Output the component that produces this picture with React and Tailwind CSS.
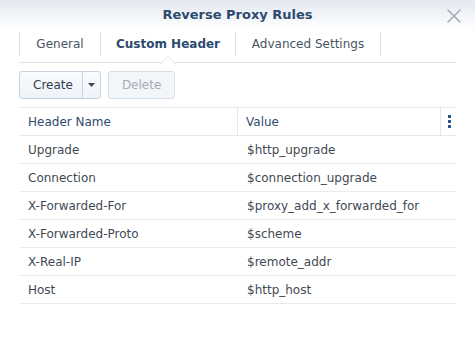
import { X } from "lucide-react";

const rows = [
  ["Upgrade", "$http_upgrade"],
  ["Connection", "$connection_upgrade"],
  ["X-Forwarded-For", "$proxy_add_x_forwarded_for"],
  ["X-Forwarded-Proto", "$scheme"],
  ["X-Real-IP", "$remote_addr"],
  ["Host", "$http_host"],
];

const App = () => {
  return (
    <div className="w-[475px] h-[340px] bg-white overflow-hidden font-['DejaVu_Sans',sans-serif] text-[12px] text-[#3f4954]">
      {/* TITLE BAR */}
      <div className="relative h-[30px] bg-gradient-to-b from-[#e3e9f0] to-white flex items-center justify-center">
        <span className="text-[13px] font-bold text-[#2c4a6e]">Reverse Proxy Rules</span>
        <X className="absolute right-[9px] top-[4px] text-[#a6abb2]" size={24} strokeWidth={1.5} />
      </div>

      {/* TABS */}
      <div className="mx-[19px] relative border-b border-[#dfe3e8]">
        <div className="flex pt-[2px] h-[32px]">
          <div className="flex items-center justify-center w-[81px] h-[24px] border-l border-[#dbe1e8] text-[#475562]">General</div>
          <div className="relative flex items-center justify-center w-[135px] h-[24px] border-l border-[#dbe1e8] font-bold text-[#2c4a6e]">
            Custom Header
            <svg className="absolute left-1/2 -translate-x-1/2 top-[24px]" width="16" height="9" viewBox="0 0 16 9">
              <path d="M0 8.5 L8 0.5 L16 8.5" fill="white" stroke="#dfe3e8" />
            </svg>
          </div>
          <div className="flex items-center justify-center w-[146px] h-[24px] border-l border-r border-[#dbe1e8] text-[#475562]">Advanced Settings</div>
        </div>
      </div>

      {/* TOOLBAR */}
      <div className="flex gap-[7px] mx-[19px] mt-[8px]">
        <div className="flex h-[28px] border border-[#c9d3dd] rounded-[3px] bg-gradient-to-b from-[#f9fbfd] to-[#eef3f8]">
          <div className="flex items-center pl-[13px] pr-[9px] text-[#2f3d4c]">Create</div>
          <div className="flex items-center justify-center w-[18px] border-l border-[#c9d3dd]">
            <svg width="7" height="4" viewBox="0 0 7 4">
              <path d="M0 0 L7 0 L3.5 4 Z" fill="#3b4a5a" />
            </svg>
          </div>
        </div>
        <div className="flex items-center h-[28px] px-[13px] border border-[#d6dee6] rounded-[3px] bg-[#f3f6f9] text-[#a4adb6]">
          Delete
        </div>
      </div>

      {/* TABLE */}
      <div className="mx-[19px] mt-[8px] border-t border-[#e3e8ed]">
        <div className="flex h-[28px] border-b border-[#e3e8ed] text-[#2f4c6e]">
          <div className="w-[219px] flex items-center px-[9px] border-r border-[#e3e8ed]">Header Name</div>
          <div className="w-[203px] flex items-center px-[8px] border-r border-[#e3e8ed]">Value</div>
          <div className="flex-1 flex items-center pl-[7px]">
            <div className="flex flex-col gap-[2px]">
              <span className="w-[3px] h-[3px] bg-[#2c5588]"></span>
              <span className="w-[3px] h-[3px] bg-[#2c5588]"></span>
              <span className="w-[3px] h-[3px] bg-[#2c5588]"></span>
            </div>
          </div>
        </div>
        {rows.map(([name, value]) => (
          <div key={name} className="flex h-[28px] border-b border-[#e8ecf0]">
            <div className="w-[219px] flex items-center px-[9px]">{name}</div>
            <div className="flex items-center px-[9px]">{value}</div>
          </div>
        ))}
      </div>
    </div>
  );
};

export default App;
